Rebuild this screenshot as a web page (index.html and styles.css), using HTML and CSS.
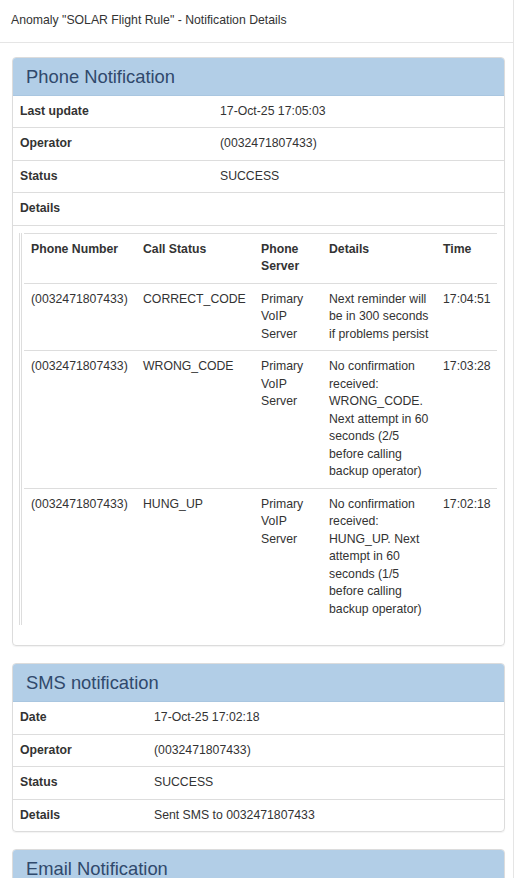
FILE: index.html
```
<!DOCTYPE html>
<html>
<head>
<meta charset="utf-8">
<link rel="stylesheet" href="styles.css">
</head>
<body>
<div class="modal">
  <div class="modal-header">
    <h4 class="modal-title">Anomaly "SOLAR Flight Rule" - Notification Details</h4>
  </div>
  <div class="modal-body">
    <div class="panel">
      <div class="panel-heading"><h3 class="panel-title">Phone Notification</h3></div>
      <table class="info-table">
        <colgroup><col class="label-col-wide"><col></colgroup>
        <tr><th>Last update</th><td>17-Oct-25 17:05:03</td></tr>
        <tr><th>Operator</th><td>(0032471807433)</td></tr>
        <tr><th>Status</th><td>SUCCESS</td></tr>
        <tr><th>Details</th><td></td></tr>
        <tr>
          <td colspan="2" class="nested-cell">
            <div class="nested-wrap">
              <table class="calls">
                <colgroup>
                  <col class="c-num"><col class="c-status"><col class="c-server"><col class="c-details"><col class="c-time">
                </colgroup>
                <thead>
                  <tr><th>Phone Number</th><th>Call Status</th><th>Phone Server</th><th>Details</th><th>Time</th></tr>
                </thead>
                <tbody>
                  <tr><td>(0032471807433)</td><td>CORRECT_CODE</td><td>Primary VoIP Server</td><td>Next reminder will be in 300 seconds if problems persist</td><td>17:04:51</td></tr>
                  <tr><td>(0032471807433)</td><td>WRONG_CODE</td><td>Primary VoIP Server</td><td>No confirmation received: WRONG_CODE. Next attempt in 60 seconds (2/5 before calling backup operator)</td><td>17:03:28</td></tr>
                  <tr><td>(0032471807433)</td><td>HUNG_UP</td><td>Primary VoIP Server</td><td>No confirmation received: HUNG_UP. Next attempt in 60 seconds (1/5 before calling backup operator)</td><td>17:02:18</td></tr>
                </tbody>
              </table>
            </div>
          </td>
        </tr>
      </table>
    </div>

    <div class="panel">
      <div class="panel-heading"><h3 class="panel-title">SMS notification</h3></div>
      <table class="info-table">
        <colgroup><col class="label-col-narrow"><col></colgroup>
        <tr><th>Date</th><td>17-Oct-25 17:02:18</td></tr>
        <tr><th>Operator</th><td>(0032471807433)</td></tr>
        <tr><th>Status</th><td>SUCCESS</td></tr>
        <tr><th>Details</th><td>Sent SMS to 0032471807433</td></tr>
      </table>
    </div>

    <div class="panel">
      <div class="panel-heading"><h3 class="panel-title">Email Notification</h3></div>
      <table class="info-table">
        <colgroup><col class="label-col-narrow"><col></colgroup>
        <tr><th>Date</th><td>17-Oct-25 17:02:18</td></tr>
      </table>
    </div>
  </div>
</div>
</body>
</html>
```
FILE: styles.css
```
html, body {
  margin: 0;
  padding: 0;
  background: #fff;
}
body {
  font-family: "Liberation Sans", Arial, Helvetica, sans-serif;
  font-size: 12.25px;
  line-height: 17.5px;
  color: #333;
  overflow: hidden;
}
.modal {
  width: 513px;
  height: 878px;
  overflow: hidden;
  border-right: 1px solid #e5e5e5;
}
.modal-header {
  padding: 12px 11px 12px;
  border-bottom: 1px solid #e5e5e5;
}
.modal-title {
  margin: 0;
  font-size: 12.25px;
  font-weight: normal;
  line-height: 17.5px;
}
.modal-body {
  padding: 14px 8px 0 12px;
}
.panel {
  border: 1px solid #dcdcdc;
  border-radius: 4px;
  margin-bottom: 17px;
  box-shadow: 0 1px 1px rgba(0,0,0,0.05);
  overflow: hidden;
}
.panel-heading {
  background: #b2cee7;
  border-bottom: 1px solid #a9c6e0;
  padding: 9px 13px 8px;
}
.panel-title {
  margin: 0;
  font-size: 18.375px;
  line-height: 20px;
  font-weight: normal;
  color: #30496c;
}
.info-table {
  width: 100%;
  border-collapse: collapse;
  table-layout: fixed;
}
.label-col-wide { width: 200px; }
.label-col-narrow { width: 134px; }
.info-table > tbody > tr > th,
.info-table > tbody > tr > td {
  padding: 7px;
  text-align: left;
  vertical-align: top;
  border-top: 1px solid #dddddd;
}
.info-table > tbody > tr:first-child > th,
.info-table > tbody > tr:first-child > td {
  border-top: 0;
}
.info-table th {
  font-weight: bold;
}
.info-table > tbody > tr > td.nested-cell {
  padding: 7px 7px 20px 6px;
}
.nested-wrap {
  border-left: 3px double #dddddd;
  padding-left: 2px;
}
.calls {
  width: 100%;
  border-collapse: collapse;
  table-layout: fixed;
  border-top: 1px solid #dddddd;
}
.c-num { width: 112px; }
.c-status { width: 118px; }
.c-server { width: 68px; }
.c-details { width: 114px; }
.c-time { width: auto; }
.calls th,
.calls td {
  padding: 7px;
  text-align: left;
  vertical-align: top;
}
.calls th {
  font-weight: bold;
  border-bottom: 1px solid #dddddd;
}
.calls tbody tr + tr td {
  border-top: 1px solid #dddddd;
}
```
